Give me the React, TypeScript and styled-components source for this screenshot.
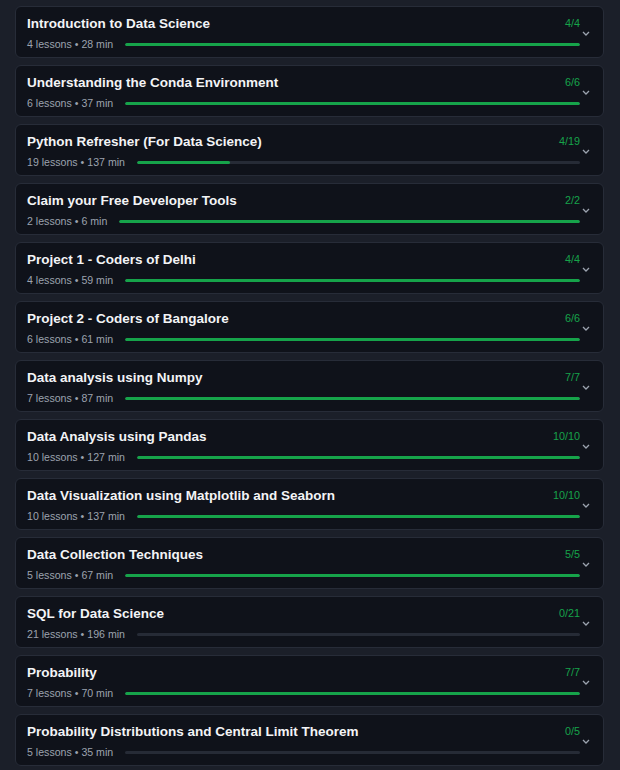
import styled, { createGlobalStyle } from "styled-components";

const GlobalStyle = createGlobalStyle`
  html, body {
    margin: 0;
    padding: 0;
    background: #1b1f29;
  }
  body {
    font-family: "Liberation Sans", Arial, sans-serif;
  }
`;

type Module = {
  title: string;
  lessons: number;
  minutes: number;
  done: number;
};

const modules: Module[] = [
  { title: "Introduction to Data Science", lessons: 4, minutes: 28, done: 4 },
  { title: "Understanding the Conda Environment", lessons: 6, minutes: 37, done: 6 },
  { title: "Python Refresher (For Data Science)", lessons: 19, minutes: 137, done: 4 },
  { title: "Claim your Free Developer Tools", lessons: 2, minutes: 6, done: 2 },
  { title: "Project 1 - Coders of Delhi", lessons: 4, minutes: 59, done: 4 },
  { title: "Project 2 - Coders of Bangalore", lessons: 6, minutes: 61, done: 6 },
  { title: "Data analysis using Numpy", lessons: 7, minutes: 87, done: 7 },
  { title: "Data Analysis using Pandas", lessons: 10, minutes: 127, done: 10 },
  { title: "Data Visualization using Matplotlib and Seaborn", lessons: 10, minutes: 137, done: 10 },
  { title: "Data Collection Techniques", lessons: 5, minutes: 67, done: 5 },
  { title: "SQL for Data Science", lessons: 21, minutes: 196, done: 0 },
  { title: "Probability", lessons: 7, minutes: 70, done: 7 },
  { title: "Probability Distributions and Central Limit Theorem", lessons: 5, minutes: 35, done: 0 },
];

const List = styled.div`
  display: flex;
  flex-direction: column;
  gap: 7px;
  padding: 6px 16px 0 15px;
`;

const Card = styled.div`
  display: flex;
  align-items: center;
  height: 52px;
  box-sizing: border-box;
  background: #0f121a;
  border: 1px solid #272c38;
  border-radius: 6px;
  padding: 8px 12px 6px 11px;
`;

const Content = styled.div`
  flex: 1;
  min-width: 0;
  display: flex;
  flex-direction: column;
`;

const TopRow = styled.div`
  display: flex;
  justify-content: space-between;
  align-items: flex-start;
  height: 18px;
`;

const Title = styled.div`
  font-size: 13.5px;
  font-weight: 700;
  line-height: 18px;
  color: #f3f4f6;
  white-space: nowrap;
`;

const Count = styled.div`
  font-size: 10.8px;
  line-height: 17px;
  color: #16a34a;
`;

const MetaRow = styled.div`
  display: flex;
  align-items: center;
  gap: 12px;
  margin-top: 4px;
  height: 14px;
`;

const Meta = styled.span`
  font-size: 10.6px;
  line-height: 14px;
  color: #9ca3af;
  white-space: nowrap;
`;

const Track = styled.div`
  flex: 1;
  height: 3px;
  border-radius: 2px;
  background: #262b36;
  overflow: hidden;
  margin-top: 1px;
`;

const Fill = styled.div`
  height: 100%;
  background: #16a34a;
  border-radius: 2px;
`;

const Toggle = styled.div`
  width: 11px;
  display: flex;
  justify-content: center;
  align-items: center;
  align-self: stretch;
  padding-top: 1px;
  color: #9ca3af;
`;

const Chevron = () => (
  <svg width="8" height="5" viewBox="0 0 8 5" fill="none">
    <path d="M1 1l3 3 3-3" stroke="currentColor" strokeWidth="1.3" />
  </svg>
);

const ModuleCard = ({ module }: { module: Module }) => {
  const pct = module.lessons ? (module.done / module.lessons) * 100 : 0;
  return (
    <Card>
      <Content>
        <TopRow>
          <Title>{module.title}</Title>
          <Count>
            {module.done}/{module.lessons}
          </Count>
        </TopRow>
        <MetaRow>
          <Meta>
            {module.lessons} lessons • {module.minutes} min
          </Meta>
          <Track>
            <Fill style={{ width: `${pct}%` }} />
          </Track>
        </MetaRow>
      </Content>
      <Toggle>
        <Chevron />
      </Toggle>
    </Card>
  );
};

const App = () => {
  return (
    <>
      <GlobalStyle />
      <List>
        {modules.map((m) => (
          <ModuleCard key={m.title} module={m} />
        ))}
      </List>
    </>
  );
};

export default App;
